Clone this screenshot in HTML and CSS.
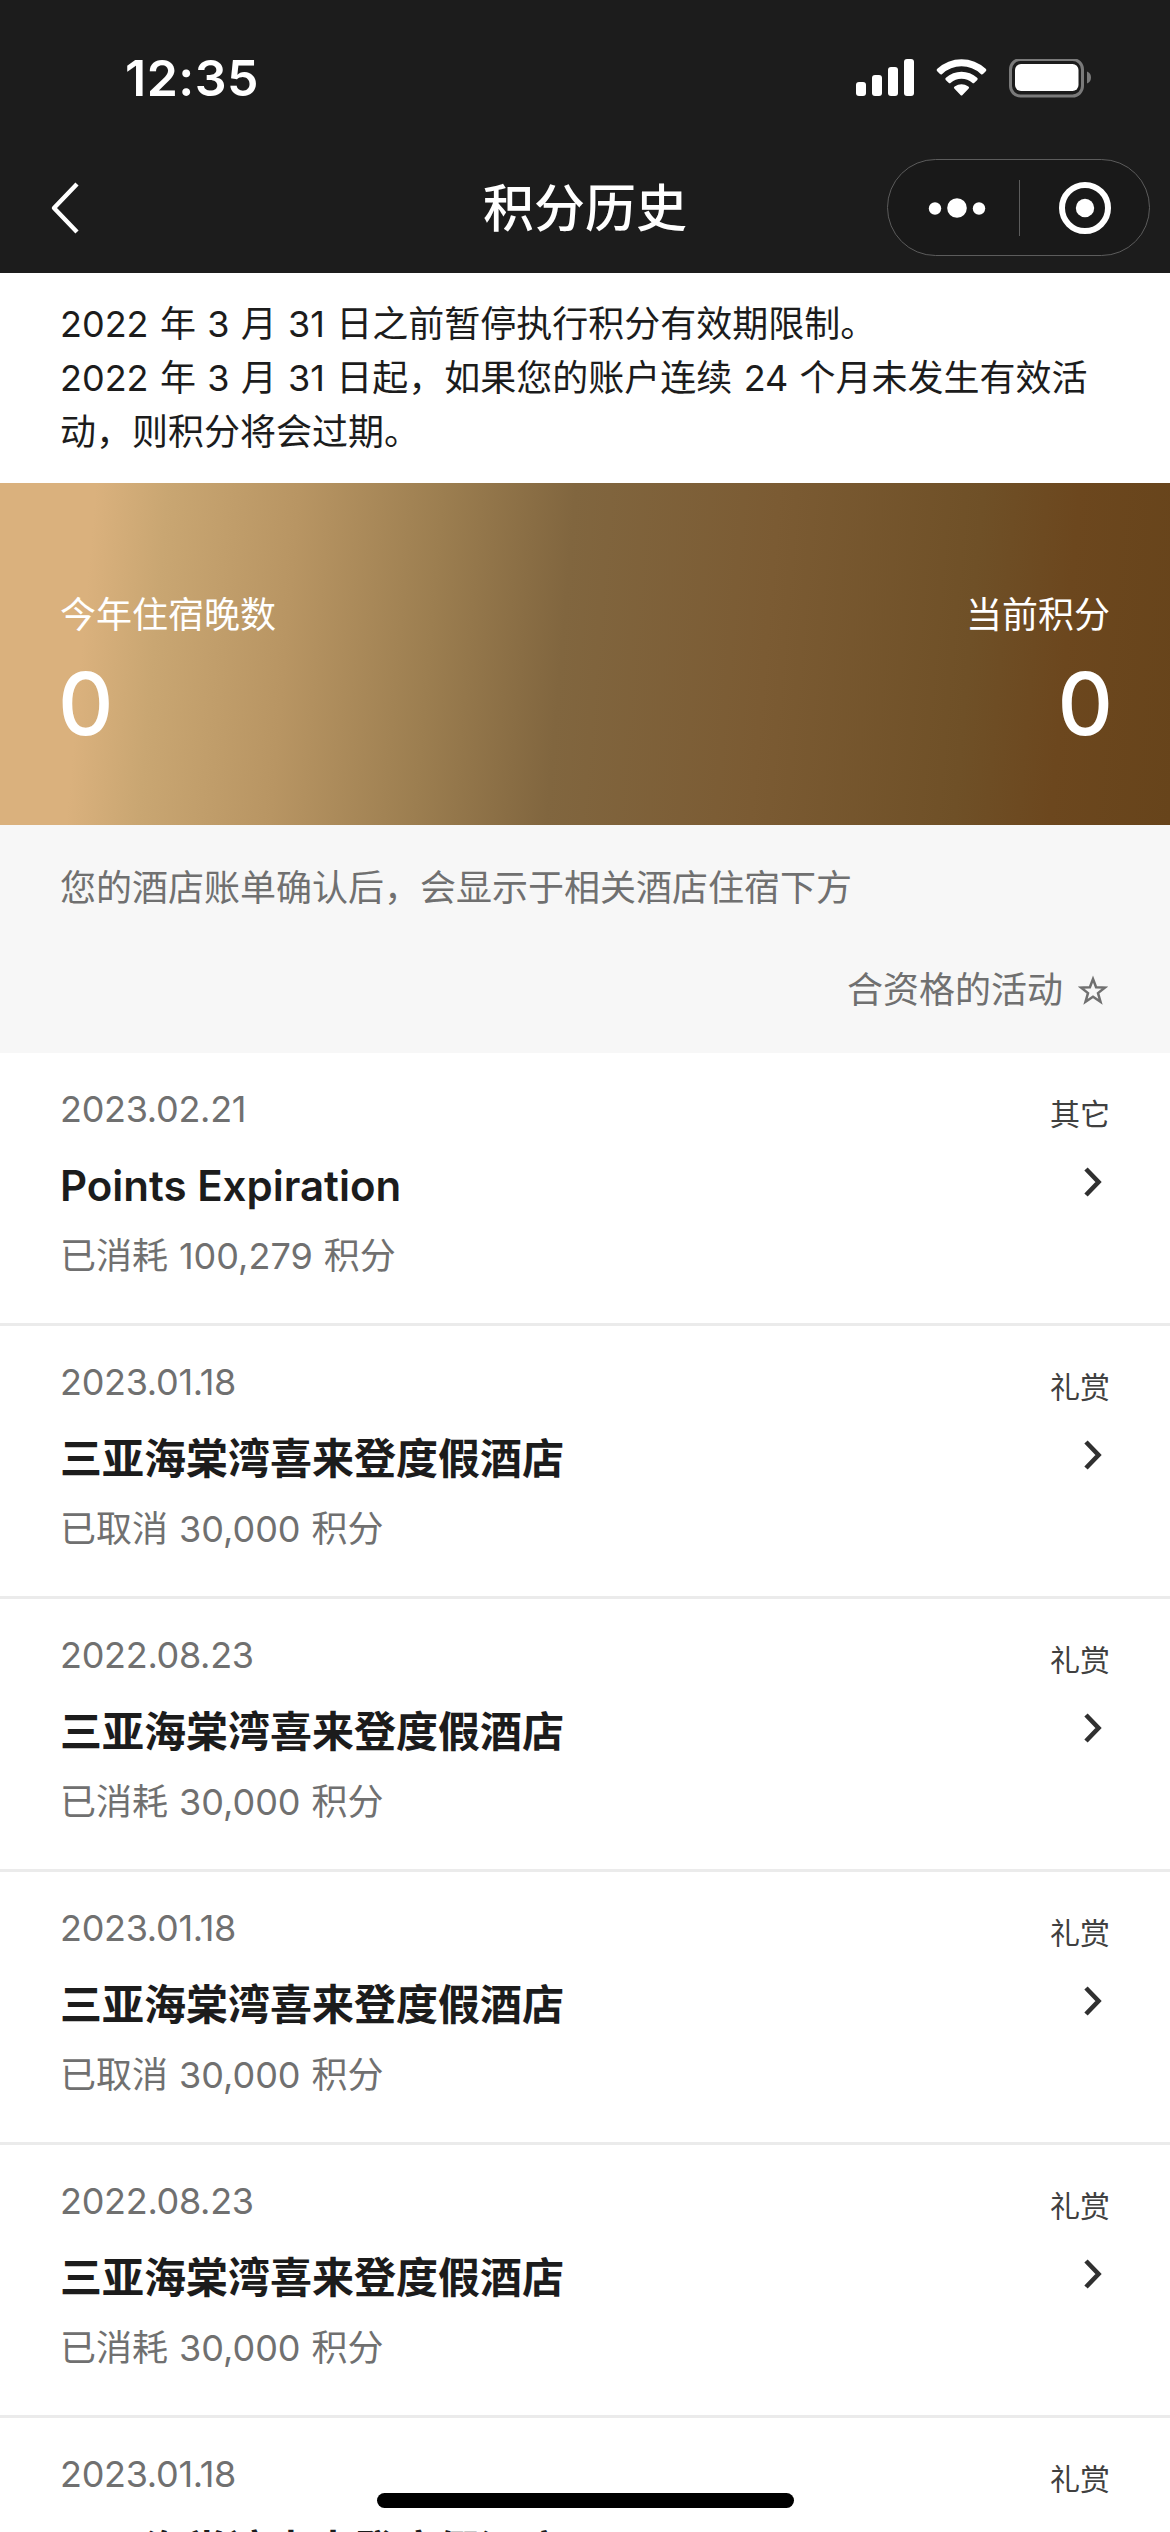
FILE: index.html
```html
<!DOCTYPE html>
<html lang="zh-CN">
<head>
<meta charset="utf-8">
<title>积分历史</title>
<link rel="stylesheet" href="styles.css">
</head>
<body>
<header class="header">
  <div class="status">
    <span class="time">12:35</span>
    <svg class="status-icons" width="236" height="40" viewBox="0 0 236 40" fill="#fff">
      <rect x="0" y="23" width="10" height="14" rx="3"/>
      <rect x="16" y="16" width="10" height="21" rx="3"/>
      <rect x="32" y="8" width="10" height="29" rx="3"/>
      <rect x="48" y="0" width="10" height="37" rx="3"/>
      <path d="M81.200 12.200Q80 11 81.300 9.800A35.500 35.500 0 0 1 129.700 9.800Q131 11 129.800 12.200L127 15Q126 16 124.800 14.900A28.500 28.500 0 0 0 86.200 14.900Q85 16 84 15Z"/>
      <path d="M89.700 20.900Q88.700 19.800 89.900 18.800A23 23 0 0 1 121.100 18.800Q122.300 19.800 121.300 20.900L118.400 23.800Q117.400 24.800 116.200 23.800A16 16 0 0 0 94.800 23.800Q93.600 24.800 92.600 23.800Z"/>
      <path d="M98.300 29.500Q97.300 28.500 98.600 27.600A12.500 12.500 0 0 1 112.400 27.600Q113.700 28.500 112.700 29.500L106.500 36Q105.500 37 104.500 36Z"/>
      <rect x="154.500" y="0.500" width="72" height="36.500" rx="10" fill="none" stroke="#7a7a7a" stroke-width="3"/>
      <rect x="159" y="5" width="63.500" height="27" rx="6"/>
      <path d="M231 12.500a6.500 6.500 0 0 1 0 12z" fill="#7a7a7a"/>
    </svg>
  </div>
  <nav class="nav">
    <svg class="back" width="30" height="54" viewBox="0 0 30 54" fill="none" stroke="#fff" stroke-width="4.400" stroke-linejoin="round"><path d="M28 3L5 27L28 51"/></svg>
    <h1 class="nav-title">积分历史</h1>
    <div class="capsule">
      <svg width="58" height="22" viewBox="0 0 58 22" fill="#fff"><circle cx="7" cy="11.500" r="6.200"/><circle cx="29" cy="11" r="9.800"/><circle cx="51" cy="11.500" r="6.200"/></svg>
      <i class="capsule-line"></i>
      <svg width="52" height="52" viewBox="0 0 52 52"><circle cx="26" cy="26" r="23" fill="none" stroke="#fff" stroke-width="6"/><circle cx="26" cy="26" r="9.200" fill="#fff"/></svg>
    </div>
  </nav>
</header>
<p class="notice">2022 年 3 月 31 日之前暂停执行积分有效期限制。<br>2022 年 3 月 31 日起，如果您的账户连续 24 个月未发生有效活<br>动，则积分将会过期。</p>
<section class="hero">
  <div class="stat"><span>今年住宿晚数</span><b class="stat-value">0</b></div>
  <div class="stat stat-right"><span>当前积分</span><b class="stat-value">0</b></div>
</section>
<section class="hint">
  <p class="hint-text">您的酒店账单确认后，会显示于相关酒店住宿下方</p>
  <p class="legend"><span>合资格的活动</span><svg width="30" height="30" viewBox="0 0 30 30" fill="none" stroke="#707070" stroke-width="2.500"><path d="M15 4l3.100 8.300 8.900.3-7 5.500 2.500 8.600-7.500-5-7.500 5 2.500-8.600-7-5.500 8.900-.3z"/></svg></p>
</section>
<main class="list">
  <article class="item">
    <div class="info"><span class="date">2023.02.21</span><h2 class="name">Points Expiration</h2><span class="points">已消耗 100,279 积分</span></div>
    <div class="side"><span class="tag">其它</span><svg class="chevron" viewBox="0 0 20 30"><path d="M3 2l12.500 13L3 28"/></svg></div>
  </article>
  <article class="item">
    <div class="info"><span class="date">2023.01.18</span><h2 class="name">三亚海棠湾喜来登度假酒店</h2><span class="points">已取消 30,000 积分</span></div>
    <div class="side"><span class="tag">礼赏</span><svg class="chevron" viewBox="0 0 20 30"><path d="M3 2l12.500 13L3 28"/></svg></div>
  </article>
  <article class="item">
    <div class="info"><span class="date">2022.08.23</span><h2 class="name">三亚海棠湾喜来登度假酒店</h2><span class="points">已消耗 30,000 积分</span></div>
    <div class="side"><span class="tag">礼赏</span><svg class="chevron" viewBox="0 0 20 30"><path d="M3 2l12.500 13L3 28"/></svg></div>
  </article>
  <article class="item">
    <div class="info"><span class="date">2023.01.18</span><h2 class="name">三亚海棠湾喜来登度假酒店</h2><span class="points">已取消 30,000 积分</span></div>
    <div class="side"><span class="tag">礼赏</span><svg class="chevron" viewBox="0 0 20 30"><path d="M3 2l12.500 13L3 28"/></svg></div>
  </article>
  <article class="item">
    <div class="info"><span class="date">2022.08.23</span><h2 class="name">三亚海棠湾喜来登度假酒店</h2><span class="points">已消耗 30,000 积分</span></div>
    <div class="side"><span class="tag">礼赏</span><svg class="chevron" viewBox="0 0 20 30"><path d="M3 2l12.500 13L3 28"/></svg></div>
  </article>
  <article class="item">
    <div class="info"><span class="date">2023.01.18</span><h2 class="name">三亚海棠湾喜来登度假酒店</h2></div>
    <div class="side"><span class="tag">礼赏</span></div>
  </article>
</main>
<div class="home-indicator"></div>
</body>
</html>
```
FILE: styles.css
```css
* { box-sizing: border-box; margin: 0; padding: 0; }
body {
  position: relative;
  display: flex;
  flex-direction: column;
  width: 1170px;
  height: 2532px;
  overflow: hidden;
  background: #fff;
  color: #1c1c1c;
  font: 370 36px/54px Inter, "Noto Sans CJK SC", sans-serif;
}
svg { display: block; flex: none; }

.header { flex: none; height: 273px; background: #1c1c1c; color: #fff; }
.status {
  display: flex;
  justify-content: space-between;
  align-items: flex-start;
  height: 159px;
  padding: 59px 78px 0 125px;
}
.time { font-size: 50px; font-weight: 600; line-height: 38px; letter-spacing: 0.5px; }
.nav {
  display: grid;
  grid-template-columns: 282px 1fr 282px;
  align-items: center;
  height: 97px;
  padding: 0 20px 0 0;
}
.back { margin-left: 49px; }
.nav-title {
  padding: 3px 0 0 20px;
  text-align: center;
  font-size: 51px;
  font-weight: 500;
  line-height: 60px;
}
.capsule {
  display: flex;
  align-items: center;
  justify-self: end;
  width: 263px;
  height: 97px;
  padding-left: 40px;
  border: 1px solid #5c5c5c;
  border-radius: 49px;
  background: #191919;
}
.capsule-line { width: 1px; height: 56px; margin: 0 39px 0 33px; background: #5c5c5c; }

.notice { flex: none; height: 210px; padding: 24px 60px 0; word-spacing: 1.2px; }

.hero {
  display: flex;
  flex: none;
  justify-content: space-between;
  height: 342px;
  padding: 105px 60px 0;
  color: #fff;
  background: linear-gradient(95deg, #dab17d 0%, #dab17d 8%, #c9a672 14%, #b89563 25%, #9c7e50 37%, #81663f 48%, #7b5b33 65%, #6f5027 82%, #6c471e 90%, #67441b 100%);
}
.stat { display: flex; flex-direction: column; gap: 14px; }
.stat-right { align-items: flex-end; }
.stat-value { font-size: 86px; font-weight: 550; line-height: 96px; margin: 0 -3px 0 -2px; }

.hint {
  display: flex;
  flex: none;
  flex-direction: column;
  gap: 48px;
  height: 228px;
  padding: 36px 60px 0;
  background: #f7f7f7;
  color: #707070;
}
.legend { display: flex; align-items: center; justify-content: flex-end; gap: 15px; padding-right: 2px; }

.item {
  display: flex;
  justify-content: space-between;
  height: 273px;
  padding: 29px 60px 0;
  border-bottom: 3px solid #ebebeb;
}
.info { display: flex; flex-direction: column; }
.date, .points { color: #707070; }
.date { letter-spacing: -0.3px; }
.points { word-spacing: 0.8px; }
.name { margin: 20px 0 13px; font-size: 42px; font-weight: 600; line-height: 60px; }
.side { display: flex; flex-direction: column; align-items: flex-end; gap: 32px; padding-top: 11px; }
.tag { color: #404040; font-size: 30px; line-height: 42px; }
.chevron { width: 20px; height: 30px; margin-right: 7px; fill: none; stroke: #303030; stroke-width: 4.6; }

.home-indicator {
  position: absolute;
  bottom: 24px;
  left: 377px;
  width: 417px;
  height: 15px;
  border-radius: 8px;
  background: #000;
}
```
